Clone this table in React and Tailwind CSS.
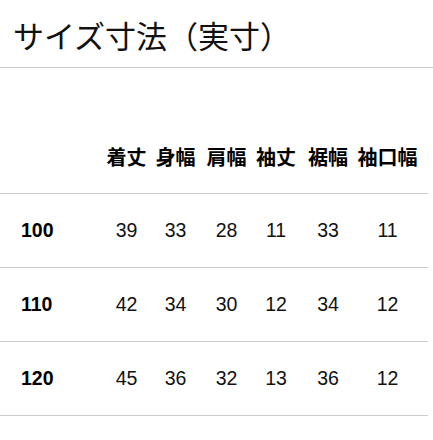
import React from 'react'

const headers = ['着丈', '身幅', '肩幅', '袖丈', '裾幅', '袖口幅']

const rows = [
  { size: '100', values: [39, 33, 28, 11, 33, 11] },
  { size: '110', values: [42, 34, 30, 12, 34, 12] },
  { size: '120', values: [45, 36, 32, 13, 36, 12] },
]

const cols = 'grid grid-cols-[103px_47px_51px_51px_48px_56px_63px_1fr]'

const App = () => {
  return (
    <div className="w-[433px] h-[440px] bg-white text-black overflow-hidden">
      {/* Title */}
      <div className="h-[68px] border-b border-[#cccccc] flex items-center pl-[13px] pt-[2px]">
        <h2 className="text-[31px] leading-none font-normal text-[#111]" style={{ fontFamily: '"Noto Sans CJK JP", sans-serif' }}>
          サイズ寸法（実寸）
        </h2>
      </div>

      {/* Table */}
      <div className="mt-[52px] w-[428px]">
        <div className={`${cols} h-[74px] items-center border-b border-[#cccccc]`}>
          <div></div>
          {headers.map((h) => (
            <div
              key={h}
              className="text-center text-[20px] font-bold whitespace-nowrap"
              style={{ fontFamily: '"Noto Sans CJK JP", sans-serif' }}
            >
              {h}
            </div>
          ))}
          <div></div>
        </div>

        {rows.map((r) => (
          <div key={r.size} className={`${cols} h-[74px] items-center border-b border-[#cccccc] font-['Liberation_Sans',sans-serif] text-[19.5px]`}>
            <div className="pl-[21px] font-bold">{r.size}</div>
            {r.values.map((v, i) => (
              <div key={i} className="text-center text-[#111]">{v}</div>
            ))}
            <div></div>
          </div>
        ))}
      </div>
    </div>
  )
}

export default App
